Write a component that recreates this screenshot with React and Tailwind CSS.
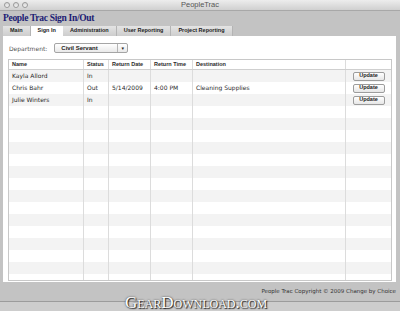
const rows = [
  { name: 'Kayla Allord', status: 'In', date: '', time: '', dest: '', btn: true },
  { name: 'Chris Bahr', status: 'Out', date: '5/14/2009', time: '4:00 PM', dest: 'Cleaning Supplies', btn: true },
  { name: 'Julie Winters', status: 'In', date: '', time: '', dest: '', btn: true },
];

const filler = Array.from({ length: 15 }, () => ({ name: '', status: '', date: '', time: '', dest: '', btn: false }));

const tabs = ['Main', 'Sign In', 'Administration', 'User Reporting', 'Project Reporting'];

const cols = 'grid grid-cols-[75px_25px_42px_42px_153px_1fr]';
const cell = 'px-[3px] flex items-center border-r border-[#dcdcdc] leading-none whitespace-nowrap overflow-hidden text-[#2a2a2a]';
const bold = "font-['Liberation_Sans',sans-serif] font-bold";

const App = () => {
  return (
    <div className="relative w-[400px] h-[311px] bg-[#c3c3c3] flex flex-col overflow-hidden font-['DejaVu_Sans',sans-serif] text-[6px] text-[#222]">
      {/* Title bar */}
      <div className="relative h-[11px] bg-gradient-to-b from-[#ededed] to-[#d0d0d0] border-b border-[#a8a8a8] flex items-center justify-center shrink-0">
        <div className="absolute left-[4px] top-[2px] flex gap-[3px]">
          <span className="w-[6px] h-[6px] rounded-full border border-[#9a9a9a] bg-gradient-to-b from-[#d8d8d8] to-[#f2f2f2]"></span>
          <span className="w-[6px] h-[6px] rounded-full border border-[#9a9a9a] bg-gradient-to-b from-[#d8d8d8] to-[#f2f2f2]"></span>
          <span className="w-[6px] h-[6px] rounded-full border border-[#9a9a9a] bg-gradient-to-b from-[#d8d8d8] to-[#f2f2f2]"></span>
        </div>
        <span className="font-['Liberation_Sans',sans-serif] text-[7.5px] text-[#555] leading-none">PeopleTrac</span>
      </div>

      {/* Heading */}
      <div className="px-[3px] pt-[3px] h-[15px] shrink-0">
        <h1 className="font-['Liberation_Serif',serif] font-bold text-[9.5px] tracking-[-0.3px] leading-none text-[#1c1c74]">People Trac Sign In/Out</h1>
      </div>

      {/* Tabs */}
      <div className="flex px-[3px] h-[10px] shrink-0 items-end">
        {tabs.map((t) => (
          <div
            key={t}
            className={
              t === 'Sign In'
                ? `h-[10px] px-[7px] flex items-center bg-white ${bold} text-[5.5px] leading-none whitespace-nowrap`
                : `h-[10px] px-[7px] flex items-center bg-gradient-to-b from-[#e4e4e4] to-[#cdcdcd] border-r border-[#b4b4b4] ${bold} text-[5.5px] leading-none whitespace-nowrap`
            }
          >
            {t}
          </div>
        ))}
      </div>

      {/* Panel */}
      <div className="ml-[3px] mr-[4px] h-[246px] bg-white flex flex-col pl-[5px] pr-[4px] shrink-0">
        <div className="flex items-center h-[23px] gap-[7px] pl-[1px] pt-[1px]">
          <span className="text-[#555] text-[6px]">Department:</span>
          <div className="w-[74px] h-[10px] border border-[#a5a5a5] rounded-[2px] bg-gradient-to-b from-white to-[#e9e9e9] flex items-center">
            <span className={`flex-1 pl-[6px] ${bold} text-[6px] leading-none`}>Civil Servant</span>
            <span className="w-[10px] h-full border-l border-[#b5b5b5] flex items-center justify-center text-[5px] leading-none">▾</span>
          </div>
        </div>

        <div className="h-[222px] border border-[#c8c8c8] overflow-hidden">
          <div className={`${cols} h-[10px] border-b border-[#cfcfcf] ${bold} text-[5.5px]`}>
            {['Name', 'Status', 'Return Date', 'Return Time', 'Destination', ''].map((h, i) => (
              <div key={i} className={`${cell} last:border-r-0`}>{h}</div>
            ))}
          </div>
          {[...rows, ...filler].map((r, i) => (
            <div key={i} className={`${cols} h-[12px] text-[6px] ${i % 2 === 0 ? 'bg-[#f3f3f3]' : 'bg-white'}`}>
              <div className={cell}>{r.name}</div>
              <div className={cell}>{r.status}</div>
              <div className={cell}>{r.date}</div>
              <div className={cell}>{r.time}</div>
              <div className={cell}>{r.dest}</div>
              <div className="flex items-center justify-center">
                {r.btn && (
                  <button
                    type="button"
                    className={`w-[32px] h-[9px] border border-[#9c9c9c] rounded-[2px] bg-gradient-to-b from-white to-[#e6e6e6] ${bold} text-[5.5px] leading-none text-[#222]`}
                  >
                    Update
                  </button>
                )}
              </div>
            </div>
          ))}
        </div>
      </div>

      {/* Footer */}
      <div className="h-[19px] flex items-center justify-end pr-[4px] shrink-0">
        <span className="text-[5.5px] text-[#333]">People Trac Copyright © 2009 Change by Choice</span>
      </div>
      <div className="flex-1 border-t border-[#9c9c9c] bg-[#cdcdcd]"></div>

      {/* Watermark */}
      <span className="absolute left-[125px] bottom-0 font-['Liberation_Serif',serif] text-[17px] leading-none text-white [font-variant:small-caps] [text-shadow:0_0_2px_#333,1px_1px_1px_#222]">
        GearDownload.com
      </span>
    </div>
  );
};

export default App;
